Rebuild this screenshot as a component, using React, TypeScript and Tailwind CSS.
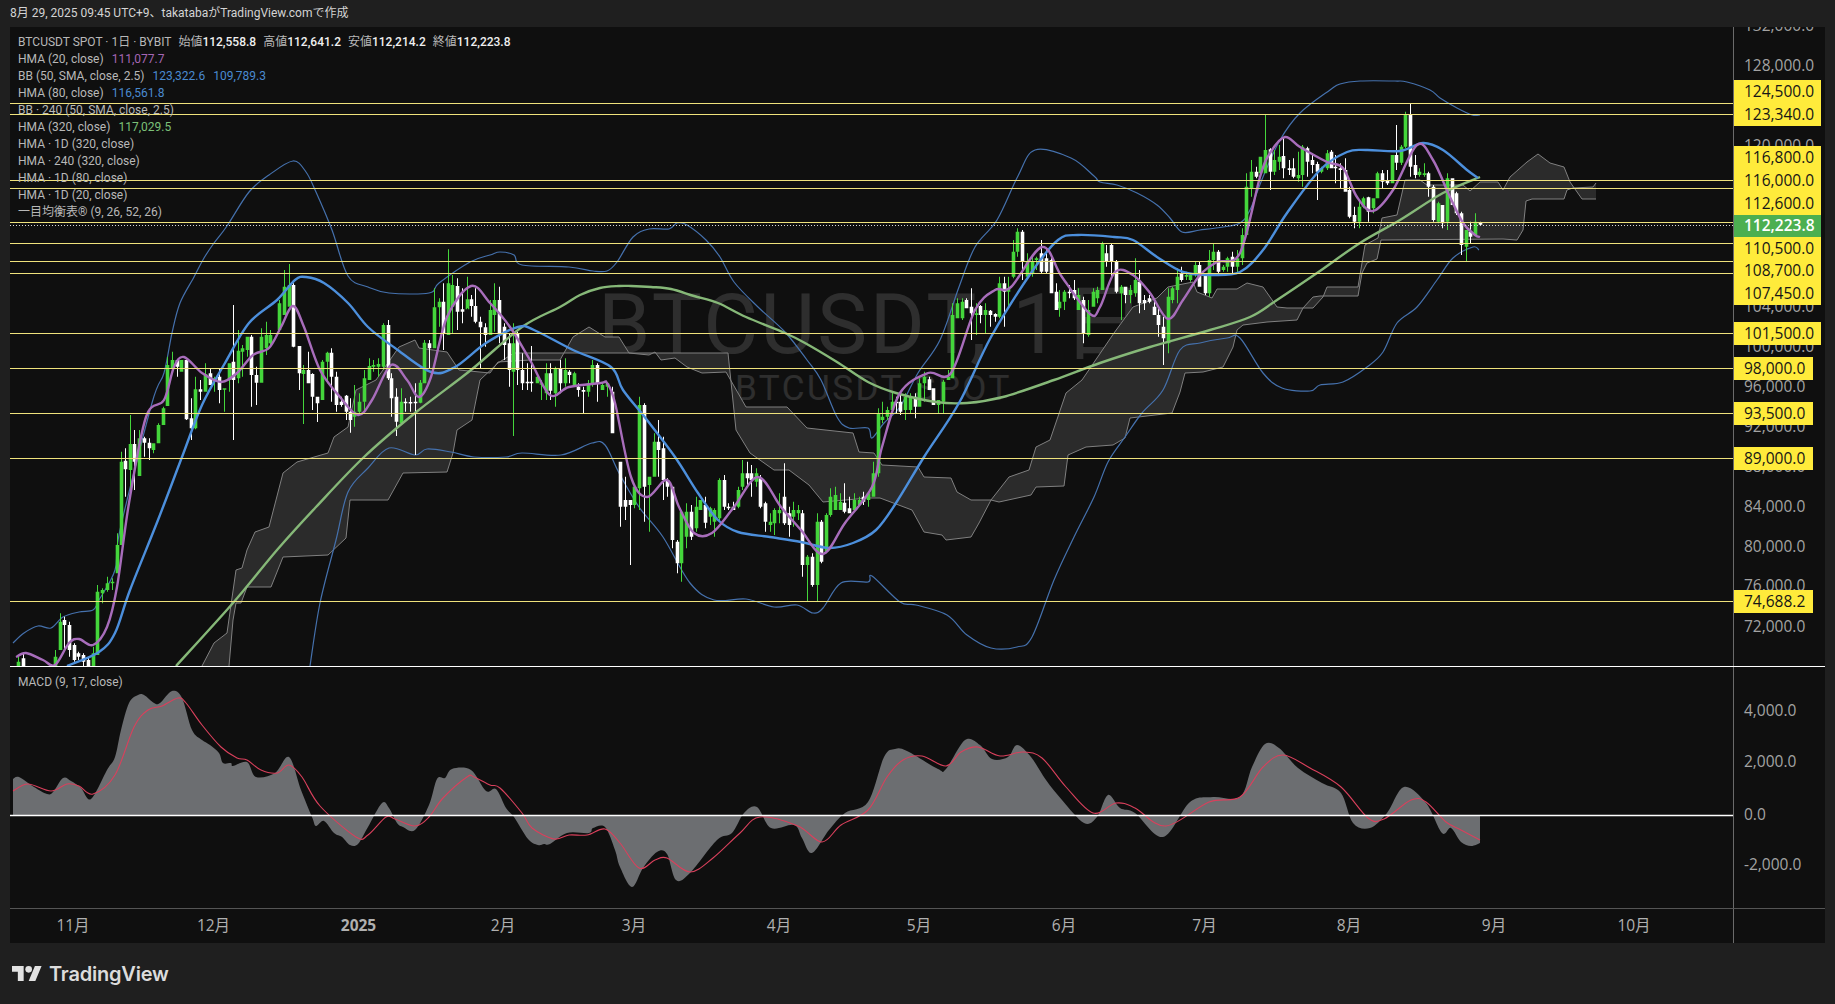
import React from "react";

type P = [number, number];

const bbUpper: P[] = [[13,643],[24,633],[38,626],[51,628],[63,617],[79,612],[93,610],[99,600],[115,570],[120,530],[152,403],[164,373],[172,333],[180,303],[194,277],[204,258],[214,243],[227,226],[249,192],[269,175],[293,161],[306,172],[316,192],[332,230],[348,276],[368,287],[389,293],[429,293],[439,283],[470,262],[490,255],[500,252],[514,255],[522,265],[569,267],[593,271],[607,271],[617,262],[633,237],[649,229],[669,229],[677,223],[687,225],[706,240],[720,257],[734,282],[758,307],[785,332],[807,360],[821,380],[837,417],[849,428],[868,428],[872,438],[884,423],[900,407],[918,373],[940,340],[959,287],[975,247],[997,220],[1018,176],[1035,150],[1071,158],[1094,176],[1100,182],[1117,185],[1137,193],[1157,205],[1170,218],[1182,232],[1200,230],[1223,227],[1240,223],[1250,210],[1263,177],[1280,140],[1300,113],[1330,90],[1340,84],[1360,81],[1395,81],[1407,82],[1430,90],[1440,98],[1457,108],[1472,115],[1480,115]];
const bbLower: P[] = [[310,666],[320,603],[336,540],[348,492],[368,468],[389,448],[415,455],[427,449],[451,452],[474,457],[506,457],[522,453],[561,455],[592,443],[605,445],[619,473],[639,507],[663,537],[690,583],[714,600],[746,599],[774,607],[797,605],[813,613],[823,608],[841,583],[868,582],[872,576],[900,602],[916,605],[947,615],[967,635],[991,648],[1017,647],[1032,637],[1054,580],[1074,537],[1094,497],[1108,462],[1125,437],[1142,413],[1163,390],[1180,350],[1200,343],[1227,338],[1240,338],[1263,373],[1282,388],[1310,391],[1320,385],[1343,382],[1367,367],[1383,352],[1397,323],[1417,307],[1437,280],[1453,258],[1473,247],[1479,250]];
const hma80: P[] = [[67,666],[99,652],[115,633],[130,590],[158,520],[182,457],[202,405],[225,363],[249,323],[277,300],[295,280],[306,277],[324,283],[348,303],[368,327],[395,348],[431,372],[455,367],[486,343],[518,327],[534,330],[573,350],[611,367],[623,390],[647,420],[675,457],[698,493],[718,520],[738,532],[770,537],[801,542],[829,548],[853,543],[876,530],[896,503],[924,457],[959,403],[991,337],[1031,273],[1058,240],[1078,235],[1114,237],[1133,240],[1157,257],[1183,272],[1210,275],[1240,272],[1263,250],[1287,213],[1320,170],[1347,152],[1367,150],[1400,151],[1423,143],[1443,150],[1467,170],[1478,178]];
const hma20: P[] = [[16,657],[26,653],[43,660],[55,665],[69,643],[79,639],[93,645],[107,627],[117,587],[129,503],[146,417],[164,400],[174,367],[184,357],[202,373],[221,382],[237,373],[253,355],[269,348],[281,327],[293,306],[304,327],[320,370],[340,397],[358,415],[372,400],[391,365],[407,380],[419,397],[431,377],[447,317],[471,286],[490,303],[510,327],[530,360],[550,395],[569,387],[601,383],[607,383],[615,403],[631,477],[647,497],[667,480],[679,507],[694,533],[712,533],[734,507],[758,477],[781,507],[801,530],[823,554],[845,523],[872,487],[882,447],[900,393],[928,373],[951,373],[975,310],[995,290],[1011,287],[1042,247],[1062,277],[1090,314],[1100,307],[1115,272],[1133,275],[1150,293],[1168,319],[1183,300],[1200,275],[1217,262],[1240,253],[1260,177],[1270,153],[1285,137],[1300,147],[1327,162],[1343,168],[1357,197],[1373,211],[1393,190],[1417,145],[1433,160],[1450,197],[1463,223],[1475,235],[1480,237]];
const hma320: P[] = [[176,666],[233,603],[277,550],[316,507],[364,457],[415,413],[471,370],[522,327],[560,307],[580,295],[600,288],[619,286],[631,286],[651,287],[671,289],[694,296],[718,303],[746,317],[785,333],[805,343],[837,362],[868,382],[896,393],[936,402],[967,403],[1003,397],[1054,380],[1100,363],[1150,347],[1210,330],[1250,317],[1277,300],[1317,273],[1360,243],[1400,220],[1443,193],[1480,177]];
const span1: P[] = [[202,666],[214,643],[227,633],[236,570],[242,568],[247,550],[255,532],[269,527],[283,473],[297,462],[328,453],[334,437],[348,427],[356,390],[376,380],[399,347],[415,340],[419,348],[447,352],[459,370],[490,373],[498,362],[530,360],[560,360],[573,337],[589,327],[605,337],[619,337],[629,353],[649,355],[655,352],[661,360],[675,358],[687,367],[702,373],[726,372],[746,407],[787,407],[807,428],[853,433],[859,452],[874,453],[882,465],[918,467],[924,477],[951,478],[957,492],[971,500],[991,500],[1009,477],[1029,470],[1036,447],[1050,440],[1066,393],[1082,380],[1114,333],[1133,307],[1157,298],[1168,287],[1193,282],[1197,292],[1212,298],[1217,289],[1237,289],[1247,283],[1263,287],[1277,307],[1287,308],[1313,308],[1323,297],[1327,287],[1358,287],[1365,245],[1378,238],[1382,218],[1397,215],[1405,180],[1420,180],[1427,185],[1463,185],[1470,191],[1480,182],[1498,182],[1503,190],[1510,177],[1527,162],[1538,154],[1550,163],[1564,167],[1570,182],[1582,199],[1596,199]];
const span2: P[] = [[229,666],[233,620],[236,603],[241,603],[247,587],[271,587],[283,557],[328,555],[346,538],[350,500],[388,500],[403,473],[447,472],[453,453],[457,430],[472,420],[480,380],[498,363],[514,353],[728,353],[736,430],[750,453],[774,470],[789,470],[809,485],[823,502],[868,498],[880,498],[912,510],[924,532],[942,535],[946,540],[971,537],[979,523],[991,500],[999,502],[1031,495],[1036,487],[1064,486],[1068,455],[1086,447],[1113,445],[1125,438],[1130,418],[1172,413],[1180,392],[1185,373],[1203,372],[1223,367],[1233,347],[1237,330],[1243,325],[1267,322],[1297,320],[1303,308],[1313,297],[1320,296],[1358,296],[1362,273],[1367,263],[1377,259],[1381,240],[1503,239],[1517,240],[1523,230],[1526,201],[1532,199],[1564,199],[1567,190],[1573,188],[1593,187],[1596,183]];
const macd: P[] = [[13,779],[19,777],[34,787],[47,794],[53,792],[63,778],[71,781],[81,788],[91,799],[107,770],[115,757],[121,730],[129,703],[138,695],[144,695],[154,703],[160,703],[172,691],[182,698],[192,730],[202,740],[210,745],[219,753],[223,763],[231,763],[233,766],[247,762],[256,777],[275,773],[289,757],[301,790],[312,817],[316,826],[324,821],[334,833],[342,837],[350,845],[358,844],[368,827],[382,803],[389,808],[397,823],[403,827],[415,830],[429,805],[437,779],[445,778],[452,769],[471,770],[486,791],[496,789],[506,808],[514,817],[528,839],[538,845],[544,844],[550,844],[567,833],[589,833],[593,828],[605,827],[615,850],[620,867],[632,887],[643,868],[657,852],[667,854],[676,880],[690,873],[717,840],[732,833],[744,813],[757,807],[771,828],[794,825],[802,838],[812,853],[829,830],[845,813],[868,802],[884,757],[895,749],[907,751],[938,769],[946,769],[965,740],[980,745],[992,759],[1008,757],[1017,745],[1031,757],[1046,780],[1062,800],[1084,823],[1097,817],[1108,795],[1120,808],[1135,813],[1163,837],[1190,802],[1213,797],[1240,797],[1252,767],[1265,744],[1279,748],[1298,768],[1322,783],[1341,793],[1353,823],[1370,828],[1387,813],[1404,787],[1426,803],[1442,833],[1451,828],[1461,842],[1471,846],[1480,843]];
const signal: P[] = [[13,791],[28,784],[51,791],[67,784],[79,786],[93,794],[115,775],[134,727],[148,710],[162,706],[178,698],[186,703],[202,725],[221,747],[237,758],[247,760],[261,770],[277,773],[289,765],[302,777],[320,806],[356,837],[368,835],[386,817],[395,819],[415,826],[429,817],[443,798],[467,777],[474,777],[490,785],[500,788],[522,813],[532,828],[554,839],[569,835],[587,835],[605,829],[620,843],[639,868],[655,860],[667,858],[690,872],[713,858],[740,833],[760,817],[798,826],[822,842],[841,825],[868,810],[887,777],[903,760],[922,756],[946,766],[961,752],[978,747],[1000,756],[1023,752],[1042,758],[1066,787],[1093,813],[1116,803],[1135,808],[1166,826],[1209,802],[1240,797],[1263,767],[1283,755],[1310,768],[1341,787],[1368,818],[1384,819],[1411,800],[1426,802],[1446,822],[1461,830],[1480,840]];

const leftCandles = "57 1300 1315 1338 1338 w;45 1310 1325 1338 1338 g;140 1290 1310 1338 1338 g;153 1180 1205 1290 1290 g;163 1190 1200 1215 1290 w;175 1205 1215 1290 1310 w;187 1270 1275 1320 1325 w;198 1295 1300 1310 1320 w;210 1300 1305 1325 1338 w;222 1310 1320 1338 1338 w;234 1280 1300 1338 1338 g;246 1095 1115 1305 1305 g;258 1105 1110 1120 1150 g;270 1070 1090 1110 1115 g;282 1075 1085 1090 1110 g;295 940 975 1060 1060 g;305 695 725 975 975 g;317 685 722 748 830 w;330 585 672 750 830 g;340 630 672 725 810 w;352 630 655 768 768 g;364 650 655 668 710 w;376 655 668 685 720 w;388 670 670 690 700 g;400 610 615 670 670 g;411 560 565 615 615 g;423 410 435 558 558 g;436 395 420 445 445 g;447 420 420 440 470 w;459 420 420 455 455 g;471 420 420 598 600 w;482 535 595 625 660 w;494 470 508 625 628 g;506 480 508 515 540 w;518 430 462 515 515 g;530 445 460 495 495 w;542 470 475 480 515 g;555 445 470 510 550 w;566 505 505 508 575 g;578 430 430 480 515 g;590 255 425 480 660 w;601 330 392 475 490 g;613 375 385 395 470 g;625 350 350 390 410 g;636 345 350 465 560 w;648 440 465 488 555 w;661 325 350 488 488 g;672 305 345 385 405 g;684 330 345 370 375 g;706 240 250 330 330 g;718 150 200 285 285 g;731 132 195 260 260 g;742 190 195 380 382 w;755 378 378 460 510 w;767 435 450 462 612 g;778 395 450 490 490 w;790 460 462 530 570 w;802 530 530 550 606 w;814 420 425 540 540 g;826 395 398 425 490 g;838 385 398 470 545 w;850 455 470 555 575 w;862 530 545 555 560 w;874 525 527 575 600 w;884 535 575 600 638 w;896 495 575 590 620 g;908 520 545 575 580 g;920 450 475 545 575 g;932 415 438 480 480 g;944 420 435 440 455 g;955 415 432 440 470 g;968 310 315 440 450 g;980 300 315 475 480 w;990 460 475 535 590 w;1002 505 530 605 648 w;1015 505 545 610 610 g;1025 535 545 550 575 w;1038 530 546 548 575 w;1050 490 545 547 705 w;1062 480 488 548 550 g;1073 360 368 490 490 g;1085 360 370 385 445 w;1097 205 262 385 385 g;1109 235 245 262 320 g;1120 190 245 340 390 w;1132 88 190 345 345 g;1144 165 195 260 340 g;1157 175 198 275 330 w;1168 205 268 275 310 w;1180 170 238 268 265 g;1192 225 238 258 290 w;1202 205 258 305 310 w;1215 290 305 322 445 w;1227 310 322 345 380 w;1238 240 270 345 345 g;1250 190 240 285 335 g;1263 200 240 340 370 w;1274 310 320 375 420 w;1286 340 370 450 500 w;1298 310 370 455 648 g;1308 335 340 450 495 w;1320 400 450 490 510 w;1332 430 485 490 510 w;1344 378 485 490 515 w;1357 465 470 490 490 g;1369 480 490 490 540 g;1380 430 460 520 540 g;1392 430 460 512 540 w;1404 440 445 520 560 g;1416 420 445 490 520 w;1428 415 450 490 500 g;1440 450 455 465 490 w;1451 455 460 495 495 g;1463 490 500 510 530 w;1475 500 510 515 580 w;1487 480 490 515 530 g;1498 420 435 490 500 g;1510 430 435 490 545 w;1522 490 495 510 510 g;1534 490 490 500 530 g;1547 500 515 640 640 w;";
const midCandles = "152 725 725 860 920 w;164 770 840 860 900 w;177 840 840 855 1035 w;188 800 800 855 865 g;201 530 555 805 870 g;213 550 555 800 905 w;225 770 770 795 935 g;237 640 665 770 770 g;248 600 665 690 770 w;260 650 685 780 840 w;271 775 780 800 830 w;284 800 800 960 985 w;295 960 965 1030 1060 w;307 870 875 1030 1085 g;319 850 875 950 985 g;331 855 875 950 960 w;343 830 860 925 935 g;355 840 840 870 870 g;366 830 855 908 925 w;379 860 865 890 915 g;390 865 870 905 950 g;402 775 780 895 900 g;414 765 780 860 870 w;425 850 860 865 870 w;437 845 860 870 870 w;449 800 810 860 865 g;461 720 760 800 810 g;473 725 760 775 800 w;484 735 760 780 830 w;496 745 760 785 800 g;506 765 775 860 865 w;518 845 850 905 935 w;530 880 905 915 935 g;542 865 870 910 945 g;554 820 870 880 910 g;567 730 830 910 915 w;578 860 880 915 950 w;590 845 870 890 920 g;602 855 870 880 900 g;613 870 880 1035 1070 w;625 1005 1010 1035 1145 g;637 1000 1010 1095 1100 w;649 880 905 1095 1145 g;661 900 905 1025 1030 w;673 880 885 995 1000 g;684 805 830 885 890 g;696 800 825 870 870 g;708 820 845 870 870 g;719 790 848 875 880 w;731 830 865 880 880 w;743 820 840 870 870 g;755 830 840 855 855 g;767 815 830 845 855 w;779 820 820 840 860 g;791 725 760 830 830 g;803 565 582 760 770 g;815 545 590 600 610 g;827 560 570 590 600 g;839 515 545 570 575 g;850 530 545 550 580 w;861 520 545 575 585 w;873 520 530 570 600 g;885 520 530 570 580 g;897 520 530 560 595 w;909 475 490 560 560 g;921 455 470 490 545 g;932 470 478 510 510 w;944 505 505 555 555 w;957 540 540 555 580 g;968 480 485 545 580 g;980 450 470 480 480 g;992 250 285 475 475 g;1004 235 250 295 295 g;1016 235 245 295 300 g;1027 235 240 265 265 w;1040 205 260 280 360 w;1051 250 280 285 345 g;1063 255 258 285 310 w;1076 250 270 285 340 g;1087 270 272 285 320 w;1099 280 282 290 305 w;1111 170 190 290 295 g;1122 170 190 215 320 w;1134 170 205 215 260 g;1146 60 95 170 175 g;1157 25 35 95 110 g;1169 30 35 125 180 w;1181 100 125 170 170 g;1193 105 125 160 170 g;1205 110 115 120 150 g;1217 60 100 155 160 w;1229 85 115 155 160 w;1241 115 120 220 220 w;1254 190 215 270 270 w;1263 210 245 265 290 g;1275 210 215 245 270 g;1287 195 215 215 235 w;1299 180 210 235 240 w;1311 205 225 270 270 g;1323 230 240 340 370 w;1335 240 270 345 350 g;1347 205 215 260 260 g;1359 200 210 235 250 g;1370 65 70 210 210 g;1382 75 100 125 140 w;1394 70 75 125 170 w;1406 120 125 215 220 w;1418 195 200 220 300 g;1430 200 200 225 250 w;1442 195 210 225 250 g;1453 115 180 220 230 g;1465 150 185 250 280 w;1477 225 240 250 270 w;1489 225 235 245 250 w;1501 240 260 285 285 w;1513 265 285 315 350 w;1525 290 320 355 435 w;1537 205 230 370 400 g;1548 200 205 240 250 g;1560 145 170 210 250 g;";
const rightCandles = "244 530 550 570 575 w;258 545 555 560 570 g;271 550 555 570 575 g;286 515 525 555 560 g;298 515 525 590 590 w;314 550 555 610 615 w;328 480 510 610 620 g;340 460 485 510 540 g;354 480 485 545 555 w;369 525 530 540 545 g;382 500 505 530 545 g;397 485 500 530 550 w;411 480 505 530 550 g;425 415 435 505 525 g;439 250 290 435 435 g;453 210 245 295 320 g;467 230 245 260 265 w;481 200 200 250 255 g;495 75 180 250 250 g;509 175 178 245 300 w;522 180 210 245 255 g;537 165 200 215 240 g;550 145 198 235 265 w;566 210 235 240 255 w;580 205 235 260 265 w;593 185 255 265 275 g;607 165 170 255 290 g;622 170 175 215 260 w;637 195 210 225 250 w;650 215 222 245 330 w;664 230 235 245 250 g;680 180 190 235 240 g;692 180 185 235 235 w;706 195 230 235 280 w;720 220 235 240 295 w;734 205 240 305 305 w;748 290 300 380 385 w;763 350 375 395 415 w;776 335 350 395 415 g;790 320 325 350 355 g;805 320 322 365 395 w;818 325 325 355 370 g;832 245 250 325 325 g;847 240 250 275 295 w;860 240 272 280 285 w;875 195 195 280 280 g;889 105 195 218 240 w;902 165 170 218 225 g;916 65 75 170 175 g;931 40 75 230 260 w;944 195 225 255 265 w;958 235 245 255 260 g;972 220 250 255 260 g;985 245 250 290 320 w;1000 285 290 390 395 w;1014 335 340 395 400 g;1027 345 345 400 415 w;1042 250 265 395 420 g;1056 265 265 345 345 w;1069 305 310 370 375 w;1083 365 370 465 495 w;1099 420 420 470 513 g;1111 395 425 440 460 w;1126 370 395 435 435 g;1140 395 398 404 406 w";

type Candle = { x: number; hi: number; top: number; bot: number; lo: number; up: boolean };

function parseCandles(src: string, mapX: (v: number) => number, mapY: (v: number) => number): Candle[] {
  return src
    .split(";")
    .filter(Boolean)
    .map((row) => {
      const f = row.trim().split(" ");
      return {
        x: Math.round(mapX(+f[0])) + 0.5,
        hi: mapY(+f[1]),
        top: mapY(+f[2]),
        bot: mapY(+f[3]),
        lo: mapY(+f[4]),
        up: f[5] === "g",
      };
    });
}

const candles: Candle[] = [
  ...parseCandles(leftCandles, (v) => v / 2.529, (v) => 220 + v / 3),
  ...parseCandles(midCandles, (v) => 560 + v / 2.529, (v) => 220 + v / 3),
  ...parseCandles(rightCandles, (v) => 1100 + v / 3, (v) => 90 + v / 3),
];

const candlePath = (up: boolean) =>
  candles
    .filter((c) => c.up === up)
    .map(
      (c) =>
        `M${c.x - 0.5} ${c.hi}h1V${c.top}h1.3V${Math.max(c.bot, c.top + 1.5)}h-1.3V${c.lo}h-1V${Math.max(c.bot, c.top + 1.5)}h-1.3V${c.top}h1.3Z`
    )
    .join("");

const poly = (pts: P[]) => pts.map((p) => p.join(",")).join(" ");

function smooth(pts: P[]): string {
  let d = `M${pts[0][0]} ${pts[0][1]}`;
  for (let i = 0; i < pts.length - 1; i++) {
    const a = pts[Math.max(i - 1, 0)];
    const b = pts[i];
    const c = pts[i + 1];
    const e = pts[Math.min(i + 2, pts.length - 1)];
    d += `C${b[0] + (c[0] - a[0]) / 6} ${b[1] + (c[1] - a[1]) / 6} ${c[0] - (e[0] - b[0]) / 6} ${c[1] - (e[1] - b[1]) / 6} ${c[0]} ${c[1]}`;
  }
  return d;
}

const levels = [103, 114, 180, 188, 222, 243, 261, 273, 333, 368, 413, 458, 601];

const legendRows: { label: string; values?: { text: string; color: string }[] }[] = [
  { label: "HMA (20, close)", values: [{ text: "111,077.7", color: "text-[#a566b5]" }] },
  {
    label: "BB (50, SMA, close, 2.5)",
    values: [
      { text: "123,322.6", color: "text-[#4a8ad0]" },
      { text: "109,789.3", color: "text-[#4a8ad0]" },
    ],
  },
  { label: "HMA (80, close)", values: [{ text: "116,561.8", color: "text-[#4a8ad0]" }] },
  { label: "BB · 240 (50, SMA, close, 2.5)" },
  { label: "HMA (320, close)", values: [{ text: "117,029.5", color: "text-[#7cc078]" }] },
  { label: "HMA · 1D (320, close)" },
  { label: "HMA · 240 (320, close)" },
  { label: "HMA · 1D (80, close)" },
  { label: "HMA · 1D (20, close)" },
  { label: "一目均衡表® (9, 26, 52, 26)" },
];

const ohlc = [
  ["始値", "112,558.8"],
  ["高値", "112,641.2"],
  ["安値", "112,214.2"],
  ["終値", "112,223.8"],
];

function Legend() {
  return (
    <div className="absolute left-2 top-[7px] text-[12px] leading-[17px] text-[#b8b8b8] font-['Roboto','Noto_Sans_CJK_JP',sans-serif]">
      <div className="flex gap-[7px] whitespace-nowrap">
        <span>BTCUSDT SPOT · 1日 · BYBIT</span>
        {ohlc.map(([k, v]) => (
          <span key={k}>
            {k}
            <b className="font-medium text-[#f0f0f0]">{v}</b>
          </span>
        ))}
      </div>
      {legendRows.map((r) => (
        <div key={r.label} className="flex gap-2 whitespace-nowrap">
          <span>{r.label}</span>
          {r.values?.map((v) => (
            <span key={v.text} className={v.color}>
              {v.text}
            </span>
          ))}
        </div>
      ))}
    </div>
  );
}

function PriceChart() {
  return (
    <svg className="absolute inset-0 h-full w-full" viewBox="10 27 1723 639" preserveAspectRatio="none">
      <polygon points={poly([...span1, ...[...span2].reverse()])} fill="#2b2b2b" />
      <polyline points={poly(span1)} fill="none" stroke="#808080" strokeWidth="1" />
      <polyline points={poly(span2)} fill="none" stroke="#808080" strokeWidth="1" />
      <path d={smooth(bbUpper)} fill="none" stroke="#4571ad" strokeWidth="1.2" />
      <path d={smooth(bbLower)} fill="none" stroke="#4571ad" strokeWidth="1.2" />
      <path d={candlePath(true)} fill="#44d63b" />
      <path d={candlePath(false)} fill="#ffffff" />
      <path d={smooth(hma320)} fill="none" stroke="#86b878" strokeWidth="2.4" />
      <path d={smooth(hma80)} fill="none" stroke="#4c8fdc" strokeWidth="2.4" />
      <path d={smooth(hma20)} fill="none" stroke="#a86dbb" strokeWidth="2.4" />
      {levels.map((y) => (
        <line key={y} x1="10" x2="1733" y1={y + 0.5} y2={y + 0.5} stroke="#efe27c" strokeWidth="1.2" />
      ))}
      <line x1="10" x2="1733" y1="225.5" y2="225.5" stroke="#d8d8d8" strokeWidth="1" strokeDasharray="1 2" />
    </svg>
  );
}

const priceTicks: [string, number][] = [
  ["132,000.0", 26],
  ["128,000.0", 66],
  ["120,000.0", 146],
  ["104,000.0", 307],
  ["100,000.0", 347],
  ["96,000.0", 387],
  ["92,000.0", 427],
  ["88,000.0", 467],
  ["84,000.0", 507],
  ["80,000.0", 547],
  ["76,000.0", 586],
  ["72,000.0", 627],
];

const priceLabels: { text: string; top: number; h: number; wide?: boolean; live?: boolean }[] = [
  { text: "124,500.0", top: 80, h: 23, wide: true },
  { text: "123,340.0", top: 103, h: 23, wide: true },
  { text: "116,800.0", top: 146, h: 23, wide: true },
  { text: "116,000.0", top: 169, h: 23, wide: true },
  { text: "112,600.0", top: 192, h: 23, wide: true },
  { text: "112,223.8", top: 215, h: 22, wide: true, live: true },
  { text: "110,500.0", top: 237, h: 23, wide: true },
  { text: "108,700.0", top: 260, h: 22, wide: true },
  { text: "107,450.0", top: 282, h: 23, wide: true },
  { text: "101,500.0", top: 322, h: 23, wide: true },
  { text: "98,000.0", top: 357, h: 23 },
  { text: "93,500.0", top: 402, h: 23 },
  { text: "89,000.0", top: 447, h: 23 },
  { text: "74,688.2", top: 590, h: 23 },
];

const axisFont = "font-['Open_Sans','Noto_Sans_CJK_JP',sans-serif] text-[15.5px]";

function PriceAxis() {
  return (
    <div className={`relative h-full flex-1 overflow-hidden border-l border-[#6a6a6a] ${axisFont}`}>
      {priceTicks.map(([t, y]) => (
        <span
          key={t}
          className="absolute left-[10px] -translate-y-1/2 leading-none text-[#a3a3a3]"
          style={{ top: y - 27 }}
        >
          {t}
        </span>
      ))}
      {priceLabels.map((l) => (
        <div
          key={l.text}
          className={`absolute left-0 flex items-center pl-[10px] ${l.wide ? "w-[87px]" : "w-[79px]"} ${
            l.live ? "bg-[#4caf50] font-semibold text-white" : "bg-[#ffeb3b] text-[#161616]"
          }`}
          style={{ top: l.top - 27, height: l.h }}
        >
          {l.text}
        </div>
      ))}
    </div>
  );
}

const macdArea = `${smooth(macd)}L1480 815.5L13 815.5Z`;

const macdTicks: [string, number][] = [
  ["4,000.0", 711],
  ["2,000.0", 762],
  ["0.0", 815],
  ["-2,000.0", 865],
];

function MacdPane() {
  return (
    <div className="flex h-[241px]">
      <div className="relative w-[1723px]">
        <span className="absolute left-2 top-[7px] text-[12px] leading-[17px] text-[#b8b8b8] font-['Roboto',sans-serif]">
          MACD (9, 17, close)
        </span>
        <svg className="absolute inset-0 h-full w-full" viewBox="10 667 1723 241" preserveAspectRatio="none">
          <path d={macdArea} fill="#6c6e71" />
          <path d={smooth(signal)} fill="none" stroke="#d9405c" strokeWidth="1.1" />
          <line x1="10" x2="1733" y1="815.5" y2="815.5" stroke="#ffffff" strokeWidth="1.5" />
        </svg>
      </div>
      <div className={`relative h-full flex-1 border-l border-[#6a6a6a] ${axisFont}`}>
        {macdTicks.map(([t, y]) => (
          <span
            key={t}
            className="absolute left-[10px] -translate-y-1/2 leading-none text-[#a3a3a3]"
            style={{ top: y - 667 }}
          >
            {t}
          </span>
        ))}
      </div>
    </div>
  );
}

const months: [string, number, boolean?][] = [
  ["11月", 73],
  ["12月", 213.5],
  ["2025", 358.5, true],
  ["2月", 503],
  ["3月", 634],
  ["4月", 779],
  ["5月", 919],
  ["6月", 1064],
  ["7月", 1204.5],
  ["8月", 1349],
  ["9月", 1494],
  ["10月", 1634],
];

function TimeAxis() {
  return (
    <div className={`flex h-[35px] border-t border-[#555555] ${axisFont}`}>
      <div className="relative w-[1723px]">
        {months.map(([t, x, bold]) => (
          <span
            key={t}
            className={`absolute top-[7px] -translate-x-1/2 leading-[19px] text-[#b0b0b0] ${bold ? "font-bold" : ""}`}
            style={{ left: x - 10 }}
          >
            {t}
          </span>
        ))}
      </div>
      <div className="flex-1 border-l border-[#6a6a6a]" />
    </div>
  );
}

function Logo() {
  return (
    <div className="flex items-center gap-[7px]">
      <svg className="h-[15px] w-[30px]" viewBox="0 4 36 18" fill="#e2e2e2">
        <path d="M14 22H7V11H0V4h14v18zM28 22h-8l7.5-18h8L28 22z" />
        <circle cx="20" cy="8" r="4" />
      </svg>
      <span className="text-[20px] font-semibold leading-none tracking-[-0.2px] text-[#dcdcdc] font-['Inter',sans-serif]">
        TradingView
      </span>
    </div>
  );
}

export default function App() {
  return (
    <div className="flex h-[1004px] w-[1835px] flex-col overflow-hidden bg-[#1f1f1f]">
      <header className="flex h-[27px] items-center pb-[1px] pl-[10px] text-[12px] text-[#d4d4d4] font-['Roboto','Noto_Sans_CJK_JP',sans-serif]">
        8月 29, 2025 09:45 UTC+9、takatabaがTradingView.comで作成
      </header>
      <main className="ml-[10px] w-[1815px] bg-[#0f0f0f]">
        <section className="flex h-[639px]">
          <div className="relative w-[1723px] overflow-hidden">
            <div className="absolute left-[588px] top-[256px] whitespace-nowrap text-[84px] leading-none tracking-[2.5px] text-white/[0.13] font-['Roboto','Noto_Sans_CJK_JP',sans-serif]">
              BTCUSDT, 1日
            </div>
            <div className="absolute left-[725px] top-[344px] whitespace-nowrap text-[35px] leading-none tracking-[2.5px] text-white/[0.13] font-['Roboto',sans-serif]">
              BTCUSDT SPOT
            </div>
            <PriceChart />
            <Legend />
          </div>
          <PriceAxis />
        </section>
        <div className="h-px bg-white" />
        <MacdPane />
        <TimeAxis />
      </main>
      <footer className="flex flex-1 items-center pl-[12px]">
        <Logo />
      </footer>
    </div>
  );
}
